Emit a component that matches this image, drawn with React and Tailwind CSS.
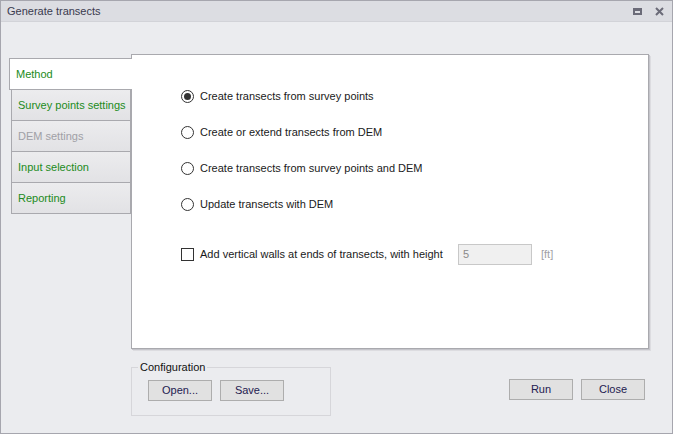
import React from 'react';

const font = { fontFamily: '"Liberation Sans", Arial, sans-serif' };

function Radio({ checked, label }) {
  return (
    <div className="flex items-center h-[16px]">
      <span className="w-[13px] h-[13px] rounded-full border border-[#333] bg-white flex items-center justify-center">
        {checked && <span className="w-[7px] h-[7px] rounded-full bg-[#333]" />}
      </span>
      <span className="ml-[6px] whitespace-nowrap">{label}</span>
    </div>
  );
}

function Tab({ label, disabled }) {
  return (
    <div
      className={
        'ml-[2px] h-[32px] flex items-center pl-[6px] border border-[#a9a9ae] -mt-[1px] whitespace-nowrap bg-gradient-to-b from-[#ececee] to-[#e2e2e5] ' +
        (disabled ? 'text-[#a0a0a6]' : 'text-[#218b21]')
      }
    >
      {label}
    </div>
  );
}

function Btn({ children }) {
  return (
    <button className="w-[64px] h-[21px] bg-[#e1e1e1] border border-[#adadad] text-[#1e2050] text-[11px] leading-none">
      {children}
    </button>
  );
}

export default function App() {
  return (
    <div className="w-[673px] h-[434px] bg-[#ebecef] text-[11px] text-[#1a1a1a] flex flex-col border border-[#a6a6ae] overflow-hidden" style={font}>
      {/* title bar */}
      <div className="h-[21px] bg-[#dcdde2] border-b border-[#d2d3d8] flex items-center pl-[6px] pr-[8px] text-[#3a3a4e]">
        <span>Generate transects</span>
        <div className="ml-auto flex items-center gap-[13px]">
          <span className="w-[9px] h-[7px] border-[2px] border-t-[3px] border-[#6b6b78]" />
          <svg width="9" height="9" viewBox="0 0 9 9">
            <path d="M1 1 L8 8 M8 1 L1 8" stroke="#6b6b78" strokeWidth="2" />
          </svg>
        </div>
      </div>

      <div className="flex pl-[8px] pt-[32px]">
        {/* tabs */}
        <div className="w-[122px] pt-[4px] flex flex-col">
          <div className="h-[32px] bg-white border border-r-0 border-[#a9a9ae] flex items-center pl-[6px] text-[#218b21] relative z-10 -mr-[1px]">
            Method
          </div>
          <Tab label="Survey points settings" />
          <Tab label="DEM settings" disabled />
          <Tab label="Input selection" />
          <Tab label="Reporting" />
        </div>

        {/* panel */}
        <div className="w-[518px] h-[295px] bg-white border border-[#a9a9ae] shadow-[1px_1px_0_#c4c4ca,2px_2px_0_#dcdce0] pl-[49px] pt-[33px]">
          <div className="flex flex-col gap-[20px]">
            <Radio checked label="Create transects from survey points" />
            <Radio label="Create or extend transects from DEM" />
            <Radio label="Create transects from survey points and DEM" />
            <Radio label="Update transects with DEM" />
          </div>
          <div className="flex items-center mt-[32px]">
            <span className="w-[13px] h-[13px] border border-[#333] bg-white" />
            <span className="ml-[6px] w-[258px] whitespace-nowrap">Add vertical walls at ends of transects, with height</span>
            <div className="w-[74px] h-[21px] bg-[#f0f0f0] border border-[#c8c8c8] flex items-center pl-[4px] text-[#8a8a8a]">5</div>
            <span className="ml-[9px] text-[#a0a0a6]">[ft]</span>
          </div>
        </div>
      </div>

      {/* bottom */}
      <div className="flex pl-[130px] pt-[11px]">
        <div className="relative w-[200px] h-[49px] border border-[#d6d6da] mt-[7px] flex items-start gap-[8px] pl-[16px] pt-[12px]">
          <span className="absolute -top-[8px] left-[6px] bg-[#ebecef] px-[2px] leading-[14px] text-[#111]">Configuration</span>
          <Btn>Open...</Btn>
          <Btn>Save...</Btn>
        </div>
        <div className="ml-auto mr-[27px] flex gap-[8px] pt-[19px]">
          <Btn>Run</Btn>
          <Btn>Close</Btn>
        </div>
      </div>
    </div>
  );
}
